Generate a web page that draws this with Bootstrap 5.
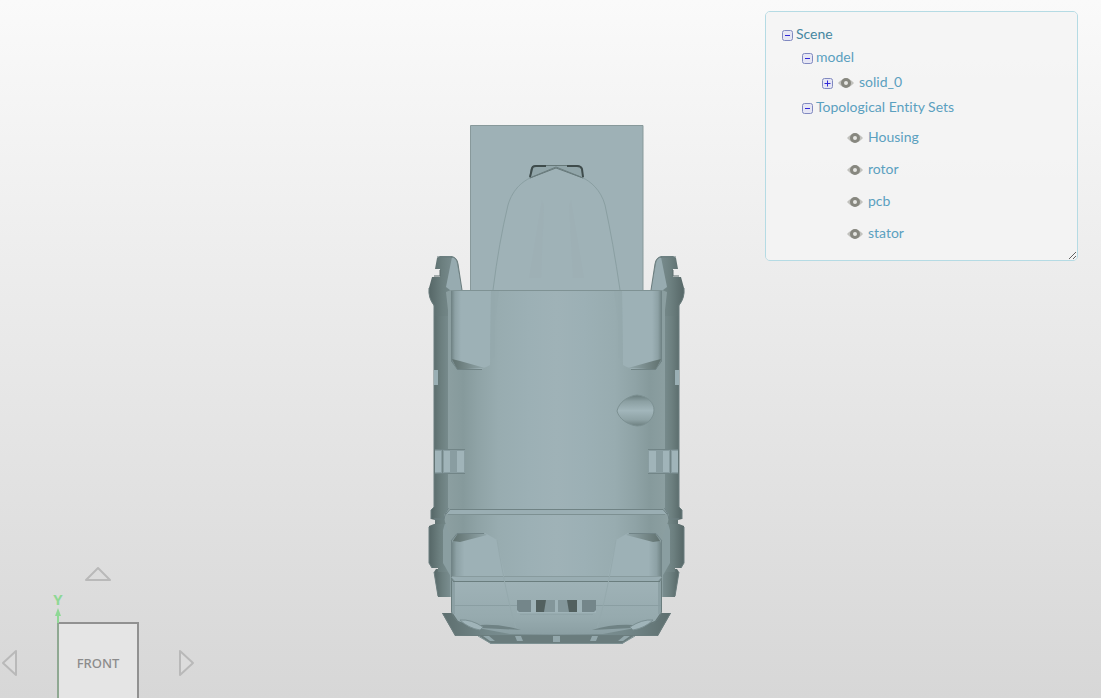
<!DOCTYPE html>
<html lang="en">
<head>
<meta charset="utf-8">
<meta name="viewport" content="width=device-width, initial-scale=1">
<title>Model viewer</title>
<link href="https://cdn.jsdelivr.net/npm/bootstrap@5.3.0/dist/css/bootstrap.min.css" rel="stylesheet">
<style>
  body { font-family: Lato, "Liberation Sans", sans-serif; }
  .viewer { background: linear-gradient(#fafafa, #d7d7d7); }
  .scene-panel {
    width: 313px; height: 250px; margin: 11px 23px 0 0; padding: 11px 16px;
    background: rgba(244, 244, 244, .8); border: 1px solid #b5dbe4; border-radius: 5px;
    resize: both; font-size: 14px; line-height: 20px; font-variant-ligatures: none;
  }
  .scene-panel ul ul { padding-left: 20px; }
  .scene-panel a { color: #5ba0bf; }
  .scene-panel .root-link { color: #4687a1; }
  .tree-row { display: flex; align-items: center; height: 25px; padding-bottom: 2px; }
  .tree-row.root-row { height: 22px; padding-bottom: 0; }
  .tree-row.leaf-row { height: 32px; padding-left: 25px; gap: 5px; }
  .tree-leaves { padding-top: 2px; }
  .toggle-btn {
    width: 11px; height: 11px; margin: 4px 3px 0 0; padding: 0; border: 0; background: none; display: flex;
  }
  .root-row .toggle-btn { margin-top: 2px; }
  .eye-btn { width: 16px; height: 12px; margin-top: 2px; padding: 0; border: 0; background: none; display: flex; }
  .solid-eye { margin: 2px 5px 0 2px; }
  .view-nav { display: grid; grid-template-columns: 57px 82px 57px; grid-template-rows: 56px 82px; margin-bottom: -6px; }
  .view-nav button { border: 0; background: none; padding: 0; }
  .view-nav .face-btn {
    border: 2px solid #919191; border-left-color: #8fa892; background: #e5e5e5; color: #8c8c8c;
    font: 500 13px/16px "Noto Sans", "Open Sans", sans-serif;
  }
  .arrow { fill: #dcdcdc; stroke: #b9b9b9; stroke-width: 2; stroke-linejoin: round; }
  .axis { left: 50px; top: 16px; pointer-events: none; }
  .axis text { font: 700 15px "Open Sans", "Noto Sans", sans-serif; }
</style>
</head>
<body>
<main class="viewer vh-100 position-relative overflow-hidden">
  <svg class="d-block w-100 h-100" viewBox="0 0 1101 698" role="img" aria-label="Front view of the housing">
    <defs>
      <linearGradient id="barrel"><stop offset="0" stop-color="#8da0a2"/><stop offset=".17" stop-color="#869a9c"/><stop offset=".3" stop-color="#8fa3a6"/><stop offset=".48" stop-color="#98acb0"/><stop offset=".75" stop-color="#9cb0b5"/><stop offset="1" stop-color="#9fb2b7"/></linearGradient>
      <linearGradient id="side"><stop offset="0" stop-color="#566767"/><stop offset=".4" stop-color="#6c7f7f"/><stop offset="1" stop-color="#83979a"/></linearGradient>
      <linearGradient id="pad"><stop offset="0" stop-color="#6d8081"/><stop offset=".1" stop-color="#8da1a5"/><stop offset=".25" stop-color="#9db1b6"/><stop offset="1" stop-color="#9db1b6"/></linearGradient>
      <linearGradient id="flare"><stop offset="0" stop-color="#5d6e6e"/><stop offset=".4" stop-color="#74888a"/><stop offset="1" stop-color="#82969a"/></linearGradient>
      <linearGradient id="shade"><stop offset="0" stop-color="#60716f"/><stop offset="1" stop-color="#93a7ab"/></linearGradient>
      <linearGradient id="hole" x2="0" y2="1"><stop offset="0" stop-color="#687b7b"/><stop offset=".2" stop-color="#8b9fa2"/><stop offset=".5" stop-color="#a2b6bb"/><stop offset=".8" stop-color="#8ea2a5"/><stop offset="1" stop-color="#6c7f7f"/></linearGradient>
      <linearGradient id="bowl" x2="0" y2="1"><stop offset="0" stop-color="#9fb2b7"/><stop offset=".7" stop-color="#96aaae"/><stop offset="1" stop-color="#8b9fa3"/></linearGradient>
      <g id="half">
        <path d="M557 634H476L491 644H557Z" fill="#6a7c7d"/>
        <path d="M557 643.500H491L478 636" fill="none" stroke="#7d9193"/>
        <path d="M483 636H489L495 641H490ZM515 636H521L523 641H517ZM553 636H557V642H553Z" fill="#93a7ab"/>
        <path d="M442 613L455 636H557V613Z" fill="url(#flare)"/>
        <path d="M442.500 613L455.500 635.500H557" fill="none" stroke="#6b7d7e"/>
        <path d="M434 572L438 597H455V569H436Z" fill="url(#side)"/>
        <path d="M434 524L429 526V563L432 568H438V572H455V524Z" fill="url(#side)"/>
        <path d="M446 520H456V577H451L443 563V530Z" fill="#8a9ea1"/>
        <path d="M434 300V507L431 510V519L435 520V524H456V298Z" fill="url(#side)"/>
        <path d="M440 256H452Q457 257 458 264L462 291H452L450 304L448 316H434V306Q428 298 429 288L432 277H440V269H435L437 258Z" fill="url(#side)"/>
        <path d="M452 257Q456 257 457 264L462 290H450L446 287Z" fill="#97abb0"/>
        <path d="M451 257Q457 257 458 264L462 290M437 257H452M429 288Q428 298 434 305V507L431 510V519M429 527V563L432 568M434 572L438 596" fill="none" stroke="#6b7d7e"/>
        <path d="M440 270V276H434" fill="none" stroke="#5a6a6a"/>
        <path d="M446 292L448 310V508L444 515L445 522L450 535V597H557V290H451Z" fill="url(#barrel)"/>
        <path d="M448.500 508Q445 512 444 519H434" fill="none" stroke="#6e8184"/>
        <path d="M451 290H491L490 365Q487 367 481 369H457L451 361Z" fill="url(#pad)"/>
        <path d="M452 359L460 361L485 368L457 369.500Z" fill="url(#shade)"/>
        <path d="M451.500 290V361L457.500 369.500H482" fill="none" stroke="#718486"/>
        <path d="M451 290.500H557" stroke="#7f9294"/>
        <path d="M491 291H499L495 320V358H490Z" fill="#95a9ad" opacity=".45"/>
        <path d="M434 370H438V385H434Z" fill="#9aafb4"/>
        <path d="M435 450H465V473H435Z" fill="#899da1"/>
        <path d="M435 451H441V472H435ZM444 451H450V472H444ZM457 451H464V472H457Z" fill="#a0b4b9"/>
        <path d="M442.500 450V473M435 449.500H465M435 473.500H465" stroke="#728587"/>
        <path d="M451 545L457 533H485L497 540L505 577V600H451Z" fill="url(#pad)"/>
        <path d="M453 541L458 533H484L487 535L460 542Z" fill="url(#shade)"/>
        <path d="M451 541L457 533.500H484M451.500 541V576" fill="none" stroke="#718487"/>
        <path d="M449 510H557V514H447Z" fill="#9aaeb3"/>
        <path d="M557 509.500H450L446 514" fill="none" stroke="#708385"/>
        <path d="M557 514.500H448" stroke="#7d9092"/>
        <path d="M451 581H557V634H510L478 628L458 621L452 612Z" fill="url(#bowl)"/>
        <path d="M451 581H455V614H452Z" fill="#8da1a5"/>
        <path d="M451 577H557V581H455Z" fill="#99adb2"/>
        <path d="M452 576.500H557" stroke="#889b9e"/>
        <path d="M557 581.500H453M451.500 581V612Q454 620 461 624" fill="none" stroke="#6a7d7e"/>
        <path d="M452 605.500H517" stroke="#8a9ea2"/>
        <path d="M497 540Q507 600 516 628" fill="none" stroke="#95a9ad"/>
        <path d="M480 625Q502 624 521 630Q501 629 481 628Z" fill="#6f8284"/>
        <path d="M460 620Q471 619 483 627L480 630Q468 628 460 620Z" fill="#a0b4b9" stroke="#7b8f92"/>
        <path d="M517 600H557V613H517Z" fill="#9fb3b8"/>
        <path d="M517 600H531V612H519L517 610Z" fill="#74868a"/>
        <path d="M536 600H555V612H536Z" fill="#83969a"/>
        <path d="M536 600H546L544 612H536Z" fill="#52605f"/>
        <path d="M520 614.500H557" stroke="#91a5a9"/>
      </g>
    </defs>
    <path d="M470.500 125.500H643V291H470.500Z" fill="#9eb1b6" stroke="#88999b"/>
    <path d="M493 290Q499 242 508 205C513 188 524 181 530 178L556 167L583 178C590 181 601 190 605 205Q613 242 620 290" fill="#9fb2b7" stroke="#8a9fa2"/>
    <path d="M542 200L529 278H541L544 205M571 200L584 278H573L569 205" fill="#97abb0" opacity=".15"/>
    <path d="M530 178L531 169Q532 165.500 536 165.500H577Q581 165.500 582 169L583 178L556 168Z" fill="#91a5a9" stroke="#667879"/>
    <path d="M530 177L532 169Q532 166 536 166H546M567 166H577Q581 166 582 169L583 177" fill="none" stroke="#3f4c4c" stroke-width="2"/>
    <path d="M532 177L556 167L581 177" fill="none" stroke="#6b7d7f"/>
    <use href="#half"/>
    <use href="#half" transform="translate(1113 0) scale(-1 1)"/>
    <path d="M617 411C619 402 628 396 637 395C648 396 654 403 654 410C654 418 647 426 637 426C628 425 619 419 617 411Z" fill="url(#hole)" stroke="#7d9193"/>
  </svg>

  <aside class="scene-panel position-absolute top-0 end-0 overflow-auto" aria-label="Scene tree">
    <ul class="list-unstyled mb-0">
      <li>
        <div class="tree-row root-row"><button class="toggle-btn" aria-label="Collapse Scene"><svg width="11" height="11"><use href="#minus"/></svg></button><a class="root-link text-decoration-none" href="#">Scene</a></div>
        <ul class="list-unstyled">
          <li>
            <div class="tree-row"><button class="toggle-btn" aria-label="Collapse model"><svg width="11" height="11"><use href="#minus"/></svg></button><a class="text-decoration-none" href="#">model</a></div>
            <ul class="list-unstyled"><li class="tree-row"><button class="toggle-btn" aria-label="Expand solid_0"><svg width="11" height="11"><use href="#plus"/></svg></button><button class="eye-btn solid-eye" aria-label="Show solid_0"><svg width="16" height="12"><use href="#eye"/></svg></button><a class="text-decoration-none" href="#">solid_0</a></li></ul>
          </li>
          <li>
            <div class="tree-row"><button class="toggle-btn" aria-label="Collapse sets"><svg width="11" height="11"><use href="#minus"/></svg></button><a class="text-decoration-none" href="#">Topological Entity Sets</a></div>
            <ul class="list-unstyled tree-leaves">
              <li class="tree-row leaf-row"><button class="eye-btn" aria-label="Show Housing"><svg width="16" height="12"><use href="#eye"/></svg></button><a class="text-decoration-none" href="#">Housing</a></li>
              <li class="tree-row leaf-row"><button class="eye-btn" aria-label="Show rotor"><svg width="16" height="12"><use href="#eye"/></svg></button><a class="text-decoration-none" href="#">rotor</a></li>
              <li class="tree-row leaf-row"><button class="eye-btn" aria-label="Show pcb"><svg width="16" height="12"><use href="#eye"/></svg></button><a class="text-decoration-none" href="#">pcb</a></li>
              <li class="tree-row leaf-row"><button class="eye-btn" aria-label="Show stator"><svg width="16" height="12"><use href="#eye"/></svg></button><a class="text-decoration-none" href="#">stator</a></li>
            </ul>
          </li>
        </ul>
      </li>
    </ul>
  </aside>

  <nav class="view-nav position-absolute bottom-0 start-0" aria-label="View orientation">
    <span></span>
    <button class="d-flex justify-content-center" aria-label="Rotate up"><svg width="28" height="16"><path class="arrow" d="M14 2L26 14H2Z"/></svg></button>
    <span></span>
    <button class="d-flex align-items-center" aria-label="Rotate left"><svg width="18" height="28"><path class="arrow" d="M3 14L16 2V26Z"/></svg></button>
    <button class="face-btn">FRONT</button>
    <button class="d-flex align-items-center justify-content-end" aria-label="Rotate right"><svg width="18" height="28"><path class="arrow" d="M15 14L2 2V26Z"/></svg></button>
    <svg class="axis position-absolute" width="17" height="50" fill="#8fd895" aria-hidden="true"><text x="8" y="23" text-anchor="middle">Y</text><path d="M8 26L11 34H9V41H7V34H5Z"/></svg>
  </nav>

  <svg class="position-absolute" width="0" height="0" aria-hidden="true">
    <symbol id="minus" viewBox="0 0 11 11"><rect x=".5" y=".5" width="10" height="10" rx="2" fill="#e6e6f4" stroke="#8089c0"/><path d="M3 5.500H8" stroke="#3028d8"/></symbol>
    <symbol id="plus" viewBox="0 0 11 11"><rect x=".5" y=".5" width="10" height="10" rx="2" fill="#e6e6f4" stroke="#8089c0"/><path d="M2.500 5.500H8.500M5.500 2.500V8.500" stroke="#3028d8"/></symbol>
    <symbol id="eye" viewBox="0 0 16 12"><path d="M0 6Q8-3 16 6Q8 15 0 6Z" fill="#c2c2be"/><circle cx="8" cy="6" r="3.500" fill="#e6e6e3" stroke="#87877f" stroke-width="3"/></symbol>
  </svg>
</main>
<script src="https://cdn.jsdelivr.net/npm/bootstrap@5.3.0/dist/js/bootstrap.bundle.min.js"></script>
</body>
</html>
